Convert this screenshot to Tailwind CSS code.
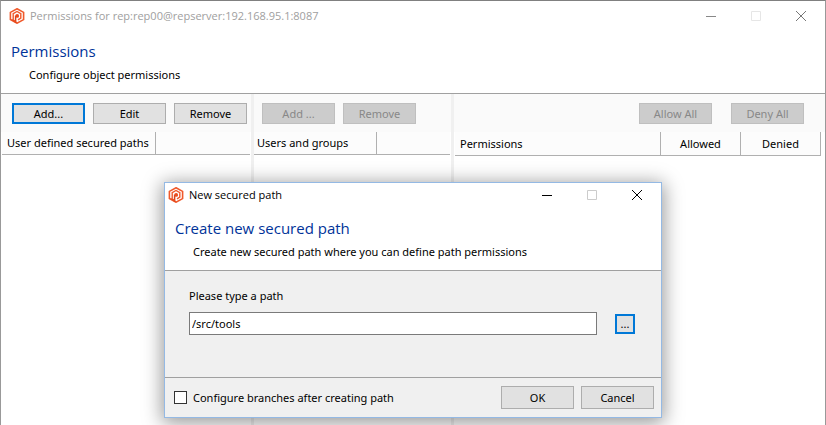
<!DOCTYPE html>
<html lang="en">
<head>
  <meta charset="utf-8" />
  <title>Permissions</title>
  <meta name="viewport" content="width=device-width, initial-scale=1" />
  <script src="https://cdn.jsdelivr.net/npm/@tailwindcss/browser@4"></script>
</head>
<body class="bg-white text-black text-[11px] leading-4 font-['Noto_Sans','Open_Sans',sans-serif]">

<!-- app logo, used by both title bars -->
<svg class="hidden">
  <symbol id="logo" viewBox="0 0 16 16">
    <path d="M8 .8 14.6 4.4V11.6L8 15.2 1.4 11.6V4.4Z" fill="#fff" stroke="#f0592b" stroke-width="1.6"/>
    <path d="M4.2 11.8V5.7L8 3.5 11.8 5.7V10.1L9 11.8" fill="none" stroke="#f0592b" stroke-width="1.4"/>
    <path d="M6.6 15V7.6" fill="none" stroke="#d8431c" stroke-width="1.5"/>
    <path d="M1.4 11.6 4.2 13.2 7.2 15V13L4.2 11.2Z" fill="#e84c1e"/>
    <circle cx="8.2" cy="7.9" r="1.9" fill="#e84c1e"/>
  </symbol>
</svg>

<main class="relative min-h-screen flex flex-col overflow-hidden border-t border-x border-[#808080] border-l-[#999] border-r-[#999]">
  <header class="border-b border-[#a0a0a0]">
    <div class="flex items-center h-[29px] pl-2 pr-[19px] text-[#a0a0a0] font-['Open_Sans','Noto_Sans',sans-serif]">
      <svg class="w-4 h-4 mr-[5px]"><use href="#logo"/></svg>
      <span class="grow">Permissions for rep:rep00@repserver:192.168.95.1:8087</span>
      <div class="flex gap-[35px]">
        <button aria-label="Minimize"><svg class="w-[10px] h-[10px]" fill="none" stroke="#888"><path d="M0 5.5H10"/></svg></button>
        <button aria-label="Maximize" disabled><svg class="w-[10px] h-[10px]" fill="none" stroke="#e6e6e6"><path d="M.5 .5H9.5V9.5H.5Z"/></svg></button>
        <button aria-label="Close"><svg class="w-[10px] h-[10px]" fill="none" stroke="#777"><path d="M0 0 10 10M10 0 0 10"/></svg></button>
      </div>
    </div>
    <div class="pl-[10px] pt-[11px] pb-[10px]">
      <h1 class="text-[15px] leading-5 text-[#003399] font-['Open_Sans','Noto_Sans',sans-serif]">Permissions</h1>
      <p class="pl-[18px] pt-[6px]">Configure object permissions</p>
    </div>
  </header>

  <div class="flex grow">
    <section class="w-[250px] shrink-0">
      <div class="flex gap-2 h-[38px] pt-[9px] pl-[11px] bg-[#fafafa]">
        <button class="w-[73px] h-[21px] bg-[#e1e1e1] border-2 border-[#0078d7] leading-4">Add...</button>
        <button class="w-[73px] h-[21px] bg-[#e1e1e1] border border-[#adadad]">Edit</button>
        <button class="w-[73px] h-[21px] bg-[#e1e1e1] border border-[#adadad]">Remove</button>
      </div>
      <div class="px-px">
        <table class="w-full table-fixed border-separate border-spacing-0 text-left">
          <thead><tr class="h-[23px] bg-[#fcfcfc]">
            <th class="w-[154px] pl-[5px] font-normal whitespace-nowrap border-b border-r border-[#b0b0b0]">User defined secured paths</th>
            <td class="border-b border-[#b0b0b0]"></td>
          </tr></thead>
        </table>
      </div>
    </section>

    <section class="w-[203px] shrink-0 border-x-[3px] border-[#f0f0f0]">
      <div class="flex gap-2 h-[38px] pt-[9px] pl-[8px] bg-[#fafafa]">
        <button disabled class="w-[73px] h-[21px] bg-[#cccccc] border border-[#bfbfbf] text-[#888]">Add ...</button>
        <button disabled class="w-[73px] h-[21px] bg-[#cccccc] border border-[#bfbfbf] text-[#888]">Remove</button>
      </div>
      <div class="pr-px">
        <table class="w-full table-fixed border-separate border-spacing-0 text-left">
          <thead><tr class="h-[23px] bg-[#fcfcfc]">
            <th class="w-[123px] pl-[3px] font-normal whitespace-nowrap border-b border-r border-[#b0b0b0]">Users and groups</th>
            <td class="border-b border-[#b0b0b0]"></td>
          </tr></thead>
        </table>
      </div>
    </section>

    <section class="grow">
      <div class="flex justify-end gap-[19px] h-[38px] pt-[9px] pr-[21px] bg-[#fafafa]">
        <button disabled class="w-[73px] h-[21px] bg-[#cccccc] border border-[#bfbfbf] text-[#888]">Allow All</button>
        <button disabled class="w-[73px] h-[21px] bg-[#cccccc] border border-[#bfbfbf] text-[#888]">Deny All</button>
      </div>
      <div class="pl-px pr-1">
        <table class="w-full table-fixed border-separate border-spacing-0">
          <thead><tr class="h-6 bg-[#fcfcfc]">
            <th class="pl-[5px] font-normal text-left border-b border-r border-[#b0b0b0]">Permissions</th>
            <th class="w-20 font-normal border-b border-r border-[#b0b0b0]">Allowed</th>
            <th class="w-20 font-normal border-b border-r border-[#b0b0b0]">Denied</th>
          </tr></thead>
        </table>
      </div>
    </section>
  </div>

  <!-- new path dialog -->
  <div role="dialog" aria-labelledby="dlgTitle" class="absolute left-[163px] top-[181px] w-[498px] bg-[#f0f0f0] border border-[#94b9e4] shadow-[0_3px_18px_2px_rgba(0,0,0,0.4)]">
    <div class="bg-white border-b border-[#a0a0a0]">
      <div class="flex items-center h-6 pl-[3px] pr-[19px] font-['Open_Sans','Noto_Sans',sans-serif]">
        <svg class="w-4 h-4 mr-[5px]"><use href="#logo"/></svg>
        <span class="grow">New secured path</span>
        <div class="flex gap-[35px]">
          <button aria-label="Minimize"><svg class="w-[10px] h-[10px]" fill="none" stroke="#000"><path d="M0 5.5H10"/></svg></button>
          <button aria-label="Maximize" disabled><svg class="w-[10px] h-[10px]" fill="none" stroke="#ccc"><path d="M.5 .5H9.5V9.5H.5Z"/></svg></button>
          <button aria-label="Close"><svg class="w-[10px] h-[10px]" fill="none" stroke="#000"><path d="M0 0 10 10M10 0 0 10"/></svg></button>
        </div>
      </div>
      <div class="pl-[10px] pt-[11px] pb-[10px]">
        <h2 id="dlgTitle" class="text-[15px] leading-5 text-[#003399] font-['Open_Sans','Noto_Sans',sans-serif]">Create new secured path</h2>
        <p class="pl-[18px] pt-[6px]">Create new secured path where you can define path permissions</p>
      </div>
    </div>
    <form id="pathForm">
      <div class="h-[106px] pl-6 pr-[26px] pt-[17px]">
        <label for="path" class="block">Please type a path</label>
        <div class="flex items-center gap-[18px] mt-2">
          <input id="path" value="/src/tools" class="grow h-[23px] px-[2px] bg-white border border-[#7a7a7a]" />
          <button type="button" class="w-5 h-5 bg-[#e1e1e1] border-2 border-[#0078d7] leading-4">...</button>
        </div>
      </div>
      <div class="flex items-center gap-[7px] h-10 pl-[9px] pr-[7px] border-t border-[#a0a0a0]">
        <label class="flex items-center gap-[6px] grow">
          <input type="checkbox" class="appearance-none w-[13px] h-[13px] bg-white border border-[#333] checked:bg-[#0078d7]" />
          Configure branches after creating path
        </label>
        <button type="submit" class="w-[73px] h-[23px] bg-[#e1e1e1] border border-[#adadad]">OK</button>
        <button type="button" class="w-[73px] h-[23px] bg-[#e1e1e1] border border-[#adadad]">Cancel</button>
      </div>
    </form>
  </div>
</main>

<script>
document.getElementById('pathForm').addEventListener('submit',e=>e.preventDefault());
</script>
</body>
</html>
